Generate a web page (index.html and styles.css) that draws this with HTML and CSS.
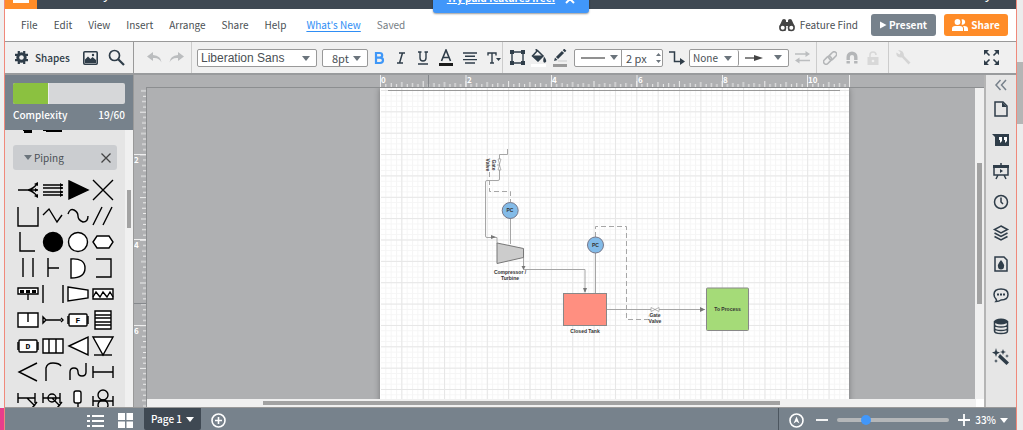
FILE: index.html
```html
<!DOCTYPE html>
<html lang="en">
<head>
<meta charset="utf-8">
<title>Diagram editor</title>
<link rel="stylesheet" href="styles.css">
</head>
<body>
<div class="edge edge-left"></div>
<div class="app">
  <header class="topbar">
    <div class="logo"><span class="logo-mark"></span></div>
    <span class="descender">y</span>
    <span class="descender descender-end">y</span>
    <div class="toast"><a href="#">Try paid features free!</a><button aria-label="Close"><svg width="10" height="10" viewBox="0 0 10 10"><path d="M1 1l8 8M9 1l-8 8" stroke="#fff" stroke-width="2"/></svg></button></div>
  </header>

  <nav class="menubar">
    <button>File</button><button>Edit</button><button>View</button><button>Insert</button><button>Arrange</button><button>Share</button><button>Help</button>
    <a href="#">What's New</a>
    <span class="saved">Saved</span>
    <button class="find"><svg width="16" height="14" viewBox="0 0 16 14"><path d="M3 2.500Q3 1 5 1T7 2.500V4h2V2.500Q9 1 11 1t2 1.500L15.500 8 13 13H9.500V8h-3v5H2L.5 8z" fill="#444"/><circle cx="3.700" cy="9.700" r="2.800" fill="#fff" stroke="#444" stroke-width="1.600"/><circle cx="12.300" cy="9.700" r="2.800" fill="#fff" stroke="#444" stroke-width="1.600"/></svg>Feature Find</button>
    <button class="cta present"><svg width="7" height="8" viewBox="0 0 7 8"><path d="M0 0.500L6.500 4 0 7.500z" fill="#fff"/></svg>Present</button>
    <button class="cta share"><svg width="16" height="12" viewBox="0 0 16 12"><g fill="#fff"><circle cx="5.500" cy="3" r="2.900"/><path d="M0 12V9.500Q0 7 3 7h5q3 0 3 2.500V12z"/><path d="M9.500.5a2.700 2.700 0 1 1 0 5q1-2.500 0-5zM11 7q5-.5 5 3v2h-4V9.500Q12 8 11 7z"/></g></svg>Share</button>
  </nav>

  <div class="toolbar">
    <div class="tools tools-shapes">
      <button class="shapes-btn"><svg width="15" height="15" viewBox="0 0 15 15"><path d="M4.800 1v13M10.200 1v13M1 4.800h13M1 10.200h13" stroke="#2f3d49" stroke-width="2.200"/><circle cx="7.500" cy="7.500" r="4" fill="none" stroke="#2f3d49" stroke-width="2.400"/><circle cx="7.500" cy="7.500" r="2.200" fill="#f0f0f0"/></svg>Shapes</button>
      <button class="tool" aria-label="Images"><svg width="15" height="14" viewBox="0 0 15 14"><rect x=".8" y=".8" width="13.400" height="12.400" rx="1" fill="#f0f0f0" stroke="#2f3d49" stroke-width="1.600"/><path d="M2 11V8.500L5 5.500l2.500 2.500L9.500 6l3.500 3v3H2z" fill="#2f3d49"/><circle cx="10" cy="4" r="1.200" fill="#2f3d49"/></svg></button>
      <button class="tool" aria-label="Search"><svg width="17" height="17" viewBox="0 0 17 17"><circle cx="6.500" cy="6.500" r="5" fill="none" stroke="#2f3d49" stroke-width="1.700"/><path d="M10 10l6 6" stroke="#2f3d49" stroke-width="2.200"/></svg></button>
    </div>
    <div class="tools tools-history">
      <button class="tool" aria-label="Undo"><svg width="15" height="11" viewBox="0 0 15 11"><path d="M6 0L0 4.500 6 9V6q6-.8 8.500 4.500Q14 3.500 6 3z" fill="#bbbdbf"/></svg></button>
      <button class="tool" aria-label="Redo"><svg width="15" height="11" viewBox="0 0 15 11"><path d="M9 0l6 4.500L9 9V6Q3 5.200.5 10.500 1 3.500 9 3z" fill="#bbbdbf"/></svg></button>
    </div>
    <div class="tools tools-text">
      <span class="pick pick-font"><select aria-label="Font"><option>Liberation Sans</option></select></span>
      <span class="pick pick-size"><select aria-label="Font size"><option>8pt</option></select></span>
      <button class="tool" aria-label="Bold"><svg width="12" height="14" viewBox="0 0 12 14"><path d="M3 2h3.500q2.700 0 2.700 2.300T6.500 6.700H3zM3 6.700h4q3 0 3 2.600T7 12H3z" fill="none" stroke="#3f97f7" stroke-width="2.200"/></svg></button>
      <button class="tool" aria-label="Italic"><svg width="12" height="14" viewBox="0 0 12 14"><path d="M4 2h6M2 12h6M7.500 2l-3 10" fill="none" stroke="#2f3d49" stroke-width="1.500"/></svg></button>
      <button class="tool" aria-label="Underline"><svg width="12" height="16" viewBox="0 0 12 16"><path d="M1 2h3.500M7.500 2H11M3 2v6q0 3 3 3t3-3V2M1 14h10" fill="none" stroke="#2f3d49" stroke-width="1.400"/></svg></button>
      <button class="tool" aria-label="Text color"><svg width="14" height="18" viewBox="0 0 14 18"><path d="M2.500 12L7 1l4.500 11M4 8.500h6" fill="none" stroke="#2f3d49" stroke-width="1.600"/><path d="M0 14h14v3H0z" fill="#1b1b1b"/></svg></button>
      <button class="tool" aria-label="Align"><svg width="14" height="12" viewBox="0 0 14 12"><path d="M0 1h14M2 4.300h10M0 7.600h14M2 11h10" stroke="#2f3d49" stroke-width="1.400"/></svg></button>
      <button class="tool" aria-label="Text options"><svg width="14" height="12" viewBox="0 0 14 12"><path d="M1 3.500V1h8v2.500M5 1v10M3 11h4" fill="none" stroke="#2f3d49" stroke-width="1.400"/><path d="M9 6h5l-2.500 3z" fill="#2f3d49"/></svg></button>
    </div>
    <div class="tools tools-line">
      <button class="tool" aria-label="Shape options"><svg width="15" height="15" viewBox="0 0 15 15"><path d="M2 2h11v11H2z" fill="none" stroke="#2f3d49" stroke-width="1.400"/><path d="M0 0h4v4H0zM11 0h4v4h-4zM0 11h4v4H0zM11 11h4v4h-4z" fill="#2f3d49"/></svg></button>
      <button class="tool" aria-label="Fill"><svg width="16" height="18" viewBox="0 0 16 18"><path d="M5 0l1 3" stroke="#2f3d49" stroke-width="1.500"/><path d="M6.500 1.500l5.500 5.500-5 5-5.500-5z" fill="#f0f0f0" stroke="#2f3d49" stroke-width="1.500"/><path d="M1.500 6.500h11L7 12.500zM13 7.500q4 5 1 6t-1-6z" fill="#2f3d49"/><path d="M0 15h15v3H0z" fill="#fff"/></svg></button>
      <button class="tool" aria-label="Line color"><svg width="15" height="18" viewBox="0 0 15 18"><path d="M4 9l6-6M10.800 2.200l1.500-1.500" stroke="#2f3d49" stroke-width="3"/><path d="M1 12l1-3.500L4.500 11z" fill="#2f3d49"/><path d="M5 12h9" stroke="#c9cbcc"/><path d="M0 15h14v3H0z" fill="#999"/></svg></button>
      <div class="combo">
        <button class="combo-line" aria-label="Line style"><svg width="24" height="2" viewBox="0 0 24 2"><path d="M0 1h24" stroke="#555" stroke-width="1.300"/></svg><i class="caret"></i></button>
        <input aria-label="Line width" value="2 px">
        <button class="spin" aria-label="Change line width"><svg width="5" height="12" viewBox="0 0 5 12"><path d="M0 4l2.500-3L5 4zM0 8h5l-2.500 3z" fill="#6b747c"/></svg></button>
      </div>
      <button class="tool elbow" aria-label="Line shape"><svg width="16" height="14" viewBox="0 0 16 14"><path d="M0 1h5.500v9.500h6" fill="none" stroke="#2f3d49" stroke-width="1.500"/><path d="M11 7l5 3.500-5 3.500z" fill="#2f3d49"/></svg></button>
      <div class="combo">
        <span class="pick pick-end"><select aria-label="Line start"><option>None</option></select></span>
        <button class="combo-arrow" aria-label="Line end"><svg width="18" height="8" viewBox="0 0 18 8"><path d="M0 4h12" stroke="#444" stroke-width="1.300"/><path d="M9 1l9 3-9 3z" fill="#444"/></svg><i class="caret"></i></button>
      </div>
      <button class="tool" aria-label="Swap ends"><svg width="15" height="13" viewBox="0 0 15 13"><path d="M0 3h12M3 9.500h12" stroke="#bbbdbf" stroke-width="1.300"/><path d="M10.500 0l4.500 3-4.500 3zM4.500 6.500L0 9.500l4.500 3z" fill="#bbbdbf"/></svg></button>
    </div>
    <div class="tools tools-lock">
      <button class="tool" aria-label="Link"><svg width="14" height="14" viewBox="0 0 14 14"><g fill="none" stroke="#b4b6b8" stroke-width="1.600"><rect x="5.200" y="2.200" width="9" height="5" rx="2.500" transform="rotate(-45 9.700 4.700)"/><rect x="0" y="6.800" width="9" height="5" rx="2.500" transform="rotate(-45 4.500 9.300)"/></g></svg></button>
      <button class="tool" aria-label="Magnet"><svg width="12" height="13" viewBox="0 0 12 13"><path d="M2.200 12.500V6a3.800 3.800 0 0 1 7.600 0v6.500" fill="none" stroke="#b4b6b8" stroke-width="3.400"/><path d="M0 9.500h12" stroke="#f0f0f0"/></svg></button>
      <button class="tool" aria-label="Lock"><svg width="12" height="14" viewBox="0 0 12 14"><path d="M3 6V4q0-3 3-3t3 3" fill="none" stroke="#d8d8d8" stroke-width="1.500"/><path d="M.5 6h11v8H.5z" fill="#d8d8d8"/><circle cx="6" cy="10" r="1.300" fill="#f0f0f0"/></svg></button>
    </div>
    <div class="tools tools-wrench">
      <button class="tool" aria-label="Settings"><svg width="15" height="15" viewBox="0 0 15 15"><path d="M2 0L4.500 2.500 3.500 4.500 0.500 2.500Q-.5 8 6 7.500l6.500 7 2-2L8 6Q8 0 2 0z" fill="#d5d5d5"/></svg></button>
    </div>
    <button class="tool full" aria-label="Full screen"><svg width="15" height="15" viewBox="0 0 15 15"><path d="M1 1l4.500 4.500M14 1L9.500 5.500M1 14l4.500-4.500M14 14L9.500 9.500" stroke="#2f3d49" stroke-width="1.600"/><path d="M0 0h5L0 5zM10 0h5v5zM0 10l5 5H0zM15 10v5h-5z" fill="#2f3d49"/></svg></button>
  </div>

  <main class="work">
    <aside class="sidebar">
      <section class="complexity">
        <div class="meter"><span class="meter-fill" style="width:32%"></span></div>
        <div class="meter-text"><span>Complexity</span><span>19/60</span></div>
      </section>
      <div class="library">
        <div class="library-list">
          <svg class="scrolled" width="45" height="3" viewBox="0 0 45 3"><path d="M6 0h9v3H7V1H6zM26 0h20v2H29v-1h-3z"/></svg>
          <div class="group"><i class="caret"></i><span>Piping</span><button aria-label="Close Piping"><svg width="10" height="10" viewBox="0 0 10 10"><path d="M.5.5l9 9M9.500.5l-9 9" stroke="#444" stroke-width="1.300"/></svg></button></div>
          <div class="shapes">
            <svg viewBox="-12 -13 24 26"><path d="M-10 0H10M0 0Q5-1 9-6M0 0Q5 1 9 6"/><path class="dot" d="M6-6l4-2v4zM6 6l4 2V4zM7-2l3 2-3 2z"/></svg>
            <svg viewBox="-12 -13 24 26"><path d="M-10-5H10M-10-2H10M-10 2H10M-10 5H10"/><path class="dot" d="M7-7l3 2-3 2zM7-4l3 2-3 2zM7 0l3 2-3 2zM7 3l3 2-3 2z"/></svg>
            <svg viewBox="-12 -13 24 26"><path class="ink" d="M-9-9L10 0-9 9z"/></svg>
            <svg viewBox="-12 -13 24 26"><path d="M-10-10L10 10M10-10L-10 10"/></svg>

            <svg viewBox="-12 -13 24 26"><path d="M-10-9V10H10V-9"/></svg>
            <svg viewBox="-12 -13 24 26"><path d="M-10-1l6-6L4 6l5-7"/></svg>
            <svg viewBox="-12 -13 24 26"><path d="M-10-2Q-8-8-4-6T0 0t5 6q5 0 5-6"/></svg>
            <svg viewBox="-12 -13 24 26"><path d="M-10 9L-1-9M0 9L9-9"/></svg>

            <svg viewBox="-12 -13 24 26"><path d="M-8-10V9H7"/></svg>
            <svg viewBox="-12 -13 24 26"><circle class="ink" r="9.500"/></svg>
            <svg viewBox="-12 -13 24 26"><circle class="paper" r="9.500"/></svg>
            <svg viewBox="-12 -13 24 26"><path class="paper" d="M-10 0l4-6H6l4 6-4 6H-6z"/></svg>

            <svg viewBox="-12 -13 24 26"><path d="M-5-10V9M5-10V9"/></svg>
            <svg viewBox="-12 -13 24 26"><path d="M-5-10V9M-5 0H6"/></svg>
            <svg viewBox="-12 -13 24 26"><path class="paper" d="M-7-9Q7-10 7 0T-7 10z"/></svg>
            <svg viewBox="-12 -13 24 26"><path d="M-7-9H8V9H-7"/></svg>

            <svg viewBox="-12 -13 24 26"><path class="paper" d="M-10-6H10V0H-10zM0 0v6"/><path class="dot" d="M-8-4h4v3h-4zM-2-4h4v3h-4zM4-4h4v3H4z"/></svg>
            <svg viewBox="-12 -13 24 26"><path d="M-10-9V9M10-9V9"/></svg>
            <svg viewBox="-12 -13 24 26"><path class="paper" d="M-10-7L10-4V4L-10 7z"/></svg>
            <svg viewBox="-12 -13 24 26"><path class="paper" d="M-10-5H10V5H-10z"/><path d="M-10 3l3-5 4 5 3-5 4 5 3-5 3 5"/></svg>

            <svg viewBox="-12 -13 24 26"><path class="paper" d="M-10-7H10V7H-10zM0-7V2"/></svg>
            <svg viewBox="-12 -13 24 26"><path d="M-10-3v6l3-3zM-7 0H8M8-2l2 2-2 2"/></svg>
            <svg viewBox="-12 -13 24 26"><rect class="paper" x="-9" y="-6" width="18" height="12" rx="1"/><path d="M-10-4v8M10-4v8"/><text y="3">F</text></svg>
            <svg viewBox="-12 -13 24 26"><path class="paper" d="M-8-9H8V9H-8zM-8-5H8M-8-2H8M-8 2H8M-8 5H8"/></svg>

            <svg viewBox="-12 -13 24 26"><rect class="paper" x="-9" y="-6" width="18" height="12" rx="1"/><path d="M-10-4v8M10-4v8"/><text y="3">D</text></svg>
            <svg viewBox="-12 -13 24 26"><path class="paper" d="M-10-7H10V7H-10zM-4-7V7M3-7V7"/></svg>
            <svg viewBox="-12 -13 24 26"><path class="paper" d="M-9 0L10-9V9z"/></svg>
            <svg viewBox="-12 -13 24 26"><path class="paper" d="M-10-9H10L0 9z"/><path d="M-9 9H9"/></svg>

            <svg viewBox="-12 -13 24 26"><path d="M9-9L-9 0 9 9"/></svg>
            <svg viewBox="-12 -13 24 26"><path d="M-7 9V-4Q-6-9 0-9t8 3"/></svg>
            <svg viewBox="-12 -13 24 26"><path d="M-8 8V0q0-4 4-4t4 4 4 4 4-4V-9"/></svg>
            <svg viewBox="-12 -13 24 26"><path d="M-10-6V6M10-6V6M-10 0H10"/></svg>

            <svg viewBox="-12 -13 24 26"><path d="M-10-5V5M7-5V5M-10 0H7M-1 0l8 8M4 10l5-6"/></svg>
            <svg viewBox="-12 -13 24 26"><path d="M-10-5V5M7-5V5M-10 0H7M-1 0l8 8M4 10l5-6"/><circle cx="-1" r="4"/></svg>
            <svg viewBox="-12 -13 24 26"><rect class="paper" x="-4" y="-7" width="7" height="12" rx="2"/><path d="M0 5v8"/></svg>
            <svg viewBox="-12 -13 24 26"><path d="M-10-2V8M10-2V8M-10 3H10"/><circle cy="-3" r="5"/><circle cy="7" r="5"/></svg>
          </div>
        </div>
        <div class="vtrack library-track"><span></span></div>
      </div>
    </aside>

    <section class="canvas">
      <svg class="ruler-top" width="100%" height="13">
        <defs><pattern id="tx" x="246" width="42.700" height="13" patternUnits="userSpaceOnUse"><path d="M.5 6v6M5.800 9v3M11.200 8v4M16.500 9v3M21.800 7v5M27.200 9v3M32.500 8v4M37.900 9v3" stroke="#eee"/></pattern></defs>
        <rect x="246" width="469" height="12" fill="url(#tx)"/>
        <path d="M246.500 0v13M332 0v12M417.500 0v12M503 0v12M588.500 0v12M673.500 0v12M715.500 0v12" stroke="#eee"/>
        <path d="M294.500 0v12" stroke="#85888c"/>
        <path d="M12 12.500H2000" stroke="#8c8e90"/>
        <text x="247" y="8">0</text><text x="333" y="8">2</text><text x="418" y="8">4</text><text x="504" y="8">6</text><text x="589" y="8">8</text><text x="674" y="8">10</text>
      </svg>
      <svg class="ruler-left" width="13" height="100%">
        <defs><pattern id="ty" y="-19" width="13" height="42.700" patternUnits="userSpaceOnUse"><path d="M6 .5h6M9 5.800h3M8 11.200h4M9 16.500h3M7 21.800h5M9 27.200h3M8 32.500h4M9 37.900h3" stroke="#eee"/></pattern></defs>
        <rect width="12" height="2000" fill="url(#ty)"/>
        <path d="M0 66.500h12M0 151.500h12M0 237.500h12" stroke="#eee"/>
        <path d="M0 215.500h12" stroke="#85888c"/>
        <path d="M12.500 0V2000" stroke="#8c8e90"/>
        <text x="0" y="75">2</text><text x="0" y="160">4</text><text x="0" y="246">6</text>
      </svg>
      <div class="stage">
        <svg class="sheet" width="469" height="600" viewBox="380 88 469 600">
          <defs>
            <pattern id="fine" x="380" y="90" width="5.340" height="5.340" patternUnits="userSpaceOnUse"><path d="M.5 0V6M0 .5H6" stroke="#f5f5f5" fill="none"/></pattern>
            <pattern id="bold" x="380" y="90" width="21.360" height="21.360" patternUnits="userSpaceOnUse"><path d="M.5 0V22M0 .5H22" stroke="#e6e6e6"/></pattern>
          </defs>
          <rect x="380" y="88" width="469" height="600" fill="#fff"/>
          <rect x="381" y="88" width="468" height="600" fill="url(#fine)"/>
          <rect x="381" y="88" width="468" height="600" fill="url(#bold)"/>
          <path d="M388 90.500h452" stroke="#999"/>
          <g class="wire">
            <path d="M507.500 149v5.500h-8v24.500q0 1.500-1.500 1.500h-11q-1.500 0-1.500 1.500v54q0 1.500 1.500 1.500h10v6"/>
            <path d="M510.500 218v26M523.500 250v17M523.500 269.500h61.500V292M595.500 252v41M606 309.500h99"/>
            <path class="dash" d="M489.500 172v19.500h21V202"/>
            <path class="dash" d="M595.500 237v-10.500h31V319.500H649v-4"/>
            <path d="M497 165h3"/>
          </g>
          <path class="tip" d="M491 235l5 2-5 2zM521.500 266h4l-2 4zM583 288h4l-2 5zM700 307l5 2.500-5 2.500z"/>
          <g fill="#fff" stroke="#999" stroke-width=".7"><path d="M498 159h3l-1.500 5zM498 170h3l-1.500-5zM651 307.500v4l4-2zM659 307.500v4l-4-2z"/></g>
          <path d="M497 243l26.500 5.500v9L497 263.500z" fill="#ccc" stroke="#777"/>
          <circle cx="510.200" cy="210.500" r="8" fill="#83bbe8" stroke="#778"/>
          <circle cx="595.500" cy="245" r="8" fill="#83bbe8" stroke="#778"/>
          <rect x="563.500" y="293.500" width="43" height="32" fill="#ff8f80" stroke="#888"/>
          <rect x="706.500" y="288" width="42" height="42.500" rx="1" fill="#a5db78" stroke="#888"/>
          <g class="note">
            <text x="510" y="212">PC</text><text x="595.500" y="247">PC</text>
            <text x="510" y="274">Compressor /</text><text x="510" y="280">Turbine</text>
            <text x="585" y="333">Closed Tank</text><text x="655" y="317">Gate</text><text x="655" y="323">Valve</text>
            <text x="727.500" y="311">To Process</text>
            <g transform="translate(492 165) rotate(90)"><text y="0">Gate</text><text y="6">Valve</text></g>
          </g>
        </svg>
      </div>
      <div class="vtrack stage-track"><span></span></div>
      <div class="htrack"><span></span></div>
    </section>

    <aside class="rail">
      <button class="collapse" aria-label="Collapse"><svg width="12" height="12" viewBox="0 0 12 12"><path d="M5.500 1L1 6l4.500 5M11 1L6.500 6l4.500 5" fill="none" stroke="#77818b" stroke-width="1.500"/></svg></button>
      <button aria-label="Page"><svg viewBox="0 0 16 16"><path class="l" d="M2 1h8l4 4v10H2z"/><path d="M9 1l5 5H9z"/></svg></button>
      <button aria-label="Comments"><svg viewBox="0 0 16 16"><path d="M-1 2h17v12H2V5z"/><path d="M6 5h3v4l-2 2V8H6zM11 5h3v4l-2 2V8h-1z" fill="#fff"/></svg></button>
      <button aria-label="Presentation"><svg viewBox="0 0 16 16"><path class="l" d="M1 4h14v8H1zM8 0v4M5 12l-2 4M11 12l2 4"/><path d="M0 2h16v3H0zM7 6l3 2-3 2z"/></svg></button>
      <button aria-label="History"><svg viewBox="0 0 16 16"><circle class="l" cx="8" cy="8" r="6.500"/><path class="l" d="M8 3.500V8l2 2"/></svg></button>
      <button aria-label="Layers"><svg viewBox="0 0 16 16"><path class="l" d="M8 1l6.500 3.500L8 8 1.500 4.500zM1.500 8L8 11.500 14.500 8M1.500 11.500L8 15l6.500-3.500"/></svg></button>
      <button aria-label="Theme"><svg viewBox="0 0 16 16"><path class="l" d="M2 1h9l3 3v11H2z"/><path d="M8 4q4 5 3 6.500a3 3 0 0 1-6 0Q4 9 8 4z"/></svg></button>
      <button aria-label="Chat"><svg viewBox="0 0 16 16"><path class="l" d="M3 12Q1 10 1 7.500 1 2 8 2t7 5.500T8 13q-2 1.500-5 1.500 1-1 0-2.500z"/><path d="M4 6.500h2v2H4zM7 6.500h2v2H7zM10 6.500h2v2h-2z"/></svg></button>
      <button aria-label="Data"><svg viewBox="0 0 16 16"><path class="l" d="M1.500 3v10q0 2.500 6.500 2.500t6.500-2.500V3M1.500 7q1 2 6.500 2t6.500-2M1.500 10.500q1 2 6.500 2t6.500-2"/><ellipse cx="8" cy="3.500" rx="7" ry="3"/></svg></button>
      <button aria-label="Magic"><svg viewBox="0 0 16 16"><path d="M7 5l9 8.500-2.500 2.500L5 8zM3-1l1 3.500L7 3.500 4 5 3 8 2 5-1 3.500 2 2.500zM10 0l.8 2.200L13 3l-2.200.8L10 6l-.8-2.200L7 3l2.200-.8zM3 10l.6 1.400L5 12l-1.400.6L3 14l-.6-1.400L1 12l1.400-.6zM14 5l.5 1.500L16 7l-1.500.5L14 9l-.5-1.500L12 7l1.500-.5z"/></svg></button>
    </aside>
  </main>

  <footer class="footer">
    <button class="list" aria-label="List"><svg width="17" height="14" viewBox="0 0 17 14"><path d="M5 2h12M5 7h12M5 12h12" stroke="#fff" stroke-width="1.800"/><path d="M0 1h3v2H0zM0 6h3v2H0zM0 11h3v2H0z" fill="#fff"/></svg></button>
    <button class="tiles" aria-label="Tiles"><svg width="15" height="15" viewBox="0 0 15 15"><path d="M0 0h7v7H0zM8.500 0h6.500v7H8.500zM0 8.500h7V15H0zM8.500 8.500H15V15H8.500z" fill="#fff"/></svg></button>
    <button class="page-tab">Page 1<i class="caret"></i></button>
    <button class="add" aria-label="Add page"><svg width="15" height="15" viewBox="0 0 15 15"><circle cx="7.500" cy="7.500" r="6.500" fill="none" stroke="#fff" stroke-width="1.600"/><path d="M7.500 4v7M4 7.500h7" stroke="#fff" stroke-width="1.600"/></svg></button>
    <div class="zoom">
      <button aria-label="Fit"><svg width="15" height="15" viewBox="0 0 15 15"><circle cx="7.500" cy="7.500" r="6.500" fill="none" stroke="#fff" stroke-width="1.600"/><path d="M7.500 3.500l3 7-3-2-3 2z" fill="#fff"/></svg></button>
      <button aria-label="Zoom out"><svg width="12" height="12" viewBox="0 0 12 12"><path d="M0 6h12" stroke="#fff" stroke-width="1.800"/></svg></button>
      <input type="range" aria-label="Zoom" min="0" max="100" value="23">
      <button aria-label="Zoom in"><svg width="12" height="12" viewBox="0 0 12 12"><path d="M0 6h12M6 0v12" stroke="#fff" stroke-width="1.800"/></svg></button>
      <button class="percent">33%<i class="caret"></i></button>
    </div>
  </footer>
</div>
<div class="edge edge-right"><span></span></div>
</body>
</html>
```
FILE: styles.css
```css
* { box-sizing: border-box; }
body {
  margin: 0;
  height: 100vh;
  display: flex;
  overflow: hidden;
  background: #efefef;
  font: 10px/16px "Noto Sans CJK SC", "Noto Sans", sans-serif;
  color: #4a4f54;
}
svg { display: block; flex: none; }
button, select, input { font: inherit; color: inherit; margin: 0; padding: 0; border: 0; background: none; border-radius: 0; }
button { display: flex; align-items: center; justify-content: center; white-space: nowrap; }

.edge-left { width: 4px; background: linear-gradient(#e83e8c, #e83e8c) bottom / 100% 22px no-repeat #efefef; }
.edge-right { width: 6px; background: #ececec; }
.edge-right span { display: block; height: 62px; margin-top: 62px; background: #b5b5b5; }
.app {
  flex: 1;
  min-width: 0;
  display: flex;
  flex-direction: column;
  border: solid #f0897b;
  border-width: 0 1px;
}

.topbar { position: relative; display: flex; height: 9px; flex: none; background: #3f4953; color: #fff; }
.logo { width: 32px; padding-left: 8px; background: #ff8c28; }
.logo-mark { display: block; width: 16px; height: 3px; background: #fff; }
.descender { margin: -8px 0 0 66px; line-height: 1px; font-size: 14px; }
.descender-end { margin: -8px 24px 0 auto; }
.toast {
  position: absolute;
  left: 428px;
  top: -12px;
  width: 156px;
  height: 25px;
  display: flex;
  align-items: center;
  justify-content: center;
  gap: 10px;
  border-radius: 0 0 3px 3px;
  background: #4197fa;
  box-shadow: 0 1px 2px #0006;
  z-index: 2;
}
.toast a { color: #fff; font-weight: 700; line-height: 14px; margin-bottom: 5px; }
.toast button { margin-bottom: 4px; }

.menubar { display: flex; align-items: center; gap: 16px; height: 32px; flex: none; padding: 0 8px 0 16px; background: #fff; }
.menubar a { margin-left: 4px; color: #2f8ef5; text-decoration: underline; text-underline-offset: 2px; }
.saved { color: #757d84; }
.find { margin-left: auto; gap: 5px; }
.cta { height: 22px; border-radius: 3px; color: #fff; font-weight: 700; }
.present { width: 65px; gap: 2px; background: #77828c; margin-left: -3px; }
.share { width: 64px; gap: 3px; background: #ff8c28; margin-left: -8px; }

.toolbar { display: flex; align-items: center; height: 34px; flex: none; border-top: 1px solid #999; border-bottom: 2px solid #999b9d; background: #f0f0f0; }
.tools { display: flex; align-items: center; height: 100%; border-right: 1px solid #ccc; flex: none; }
.tool { flex: none; }
.tools-shapes { width: 129px; padding-left: 9px; border-color: #999; gap: 10px; }
.shapes-btn { gap: 6px; margin-right: 3px; font-weight: 500; color: #2f3d49; }
.tools-history { width: 58px; padding-left: 13px; gap: 7px; }
.tools-text { width: 311px; padding-left: 5px; gap: 10px; }
.tools-line { width: 314px; padding-left: 7px; gap: 6px; }
.tools-lock { width: 72px; padding-left: 6px; gap: 9px; }
.tools-wrench { padding-left: 7px; border: 0; }
.full { margin: 0 17px 0 auto; }
.elbow { margin-right: -2px; }

.pick { position: relative; display: flex; height: 18px; border: 1px solid #999; border-radius: 2px; background: #fff; }
.pick select { appearance: none; width: 100%; padding-left: 3px; line-height: 16px; outline: 0; }
.pick::after, .caret { content: ""; border: solid transparent; border-width: 5px 4px 0; border-top-color: #6b747c; }
.pick::after { position: absolute; right: 6px; top: 6px; pointer-events: none; }
.pick-font { width: 120px; font-family: "Liberation Sans", sans-serif; font-size: 12px; }
.pick-size { width: 46px; margin-left: -5px; margin-right: -5px; font-size: 11px; }
.pick-size select { padding-left: 9px; }
.combo { display: flex; height: 18px; border: 1px solid #999; border-radius: 2px; background: #fff; }
.combo-line { width: 47px; gap: 5px; padding-left: 3px; border-right: 1px solid #999; }
.combo input { width: 32px; padding-left: 4px; outline: 0; font-size: 11px; }
.spin { width: 8px; }
.pick-end { width: 49px; height: 16px; border: 0; border-right: 1px solid #999; }
.combo-arrow { width: 49px; gap: 11px; }

.work { flex: 1; min-height: 0; display: flex; }
.sidebar { width: 129px; flex: none; display: flex; flex-direction: column; border-right: 1px solid #999; background: #e5e5e5; }
.complexity { height: 55px; flex: none; padding: 8px 8px 0; background: #77828c; color: #fff; font-weight: 500; }
.meter { height: 21px; border-radius: 2px; overflow: hidden; background: #d6d7d9; }
.meter-fill { display: block; height: 100%; background: #8bc140; border-right: 1px solid #eee; }
.meter-text { display: flex; justify-content: space-between; padding-top: 3px; }
.library { flex: 1; min-height: 0; display: flex; overflow: hidden; }
.library-list { flex: 1; }
.scrolled { margin-left: 12px; }
.group { display: flex; align-items: center; height: 25px; margin: 12px 8px 0; padding: 0 6px 0 11px; border-radius: 3px; background: #cbcdd0; }
.group span { margin: 0 auto 0 2px; }
.shapes { display: grid; grid-template-columns: repeat(4, 25px); grid-auto-rows: 26px; justify-items: center; margin: 7px 0 0 10px; }
.shapes svg { width: 24px; height: 26px; fill: none; stroke: #000; stroke-width: 1.4px; }
.shapes .ink { fill: #000; }
.shapes .dot { fill: #000; stroke: none; }
.shapes .paper { fill: #fff; }
.shapes text { fill: #000; stroke: none; font: bold 8px "Liberation Mono", monospace; text-anchor: middle; }
.vtrack { width: 8px; flex: none; background: #f0f0f0; padding: 0 2px; }
.vtrack span { display: block; background: #a2a2a2; }
.library-track span { height: 38px; margin-top: 60px; }

.canvas { flex: 1; min-width: 0; display: grid; grid-template: 13px minmax(0, 1fr) 8px / 13px minmax(0, 1fr) 9px; background: #afb0b2; }
.canvas text { fill: #fff; font-size: 8px; font-weight: 700; }
.ruler-top { grid-column: 1 / -1; }
.ruler-left { grid-row: 2 / 4; height: 100%; overflow: hidden; }
.stage { overflow: hidden; padding-left: 233px; }
.sheet { box-shadow: 0 0 6px #0005; }
.stage-track { width: auto; }
.stage-track span { height: 141px; margin-top: 75px; }
.htrack { grid-column: 2 / 4; padding: 2px 204px 2px 116px; background: linear-gradient(#fff, #fff) right / 8px no-repeat #f0f0f0; }
.htrack span { display: block; height: 4px; background: #a2a2a2; }
.wire { fill: none; stroke: #a6a6a6; stroke-width: 1; }
.wire .dash { stroke-dasharray: 5 3; }
.tip { fill: #777; }
.canvas .note text { fill: #333; font: bold 5px "Liberation Sans", sans-serif; text-anchor: middle; }

.rail { width: 32px; flex: none; display: flex; flex-direction: column; align-items: center; gap: 15px; padding: 4px 0 0; border-left: 2px solid #b5b5b5; background: #e6e6e6; }
.rail button svg { width: 16px; height: 16px; overflow: visible; fill: #2f3d49; }
.rail .l { fill: none; stroke: #2f3d49; stroke-width: 1.5px; }
.rail .collapse svg { width: 12px; height: 12px; }
.collapse { margin-bottom: -5px; }

.footer { display: flex; align-items: center; height: 23px; flex: none; border-top: 1px solid #999; background: #77828c; color: #fff; font-weight: 500; }
.list { margin: 3px 14px 0 82px; }
.tiles { margin-top: 2px; }
.page-tab { align-self: stretch; width: 57px; gap: 4px; margin: 0 10px 0 11px; background: #3f4953; border-radius: 0 0 2px 2px; }
.footer .caret { border-top-color: #fff; }
.add { margin-top: 2px; }
.zoom { display: flex; align-items: center; align-self: stretch; margin-left: auto; padding: 2px 8px 0 10px; border-left: 1px solid #4c565f; gap: 12px; }
.zoom input { appearance: none; width: 112px; height: 10px; margin: 0 -3px; }
.zoom input::-webkit-slider-runnable-track { height: 4px; border-radius: 2px; background: #b5b7b9; }
.zoom input::-webkit-slider-thumb { appearance: none; width: 10px; height: 10px; margin-top: -3px; border-radius: 50%; background: #4197fa; }
.percent { gap: 4px; margin-left: -7px; }
```
